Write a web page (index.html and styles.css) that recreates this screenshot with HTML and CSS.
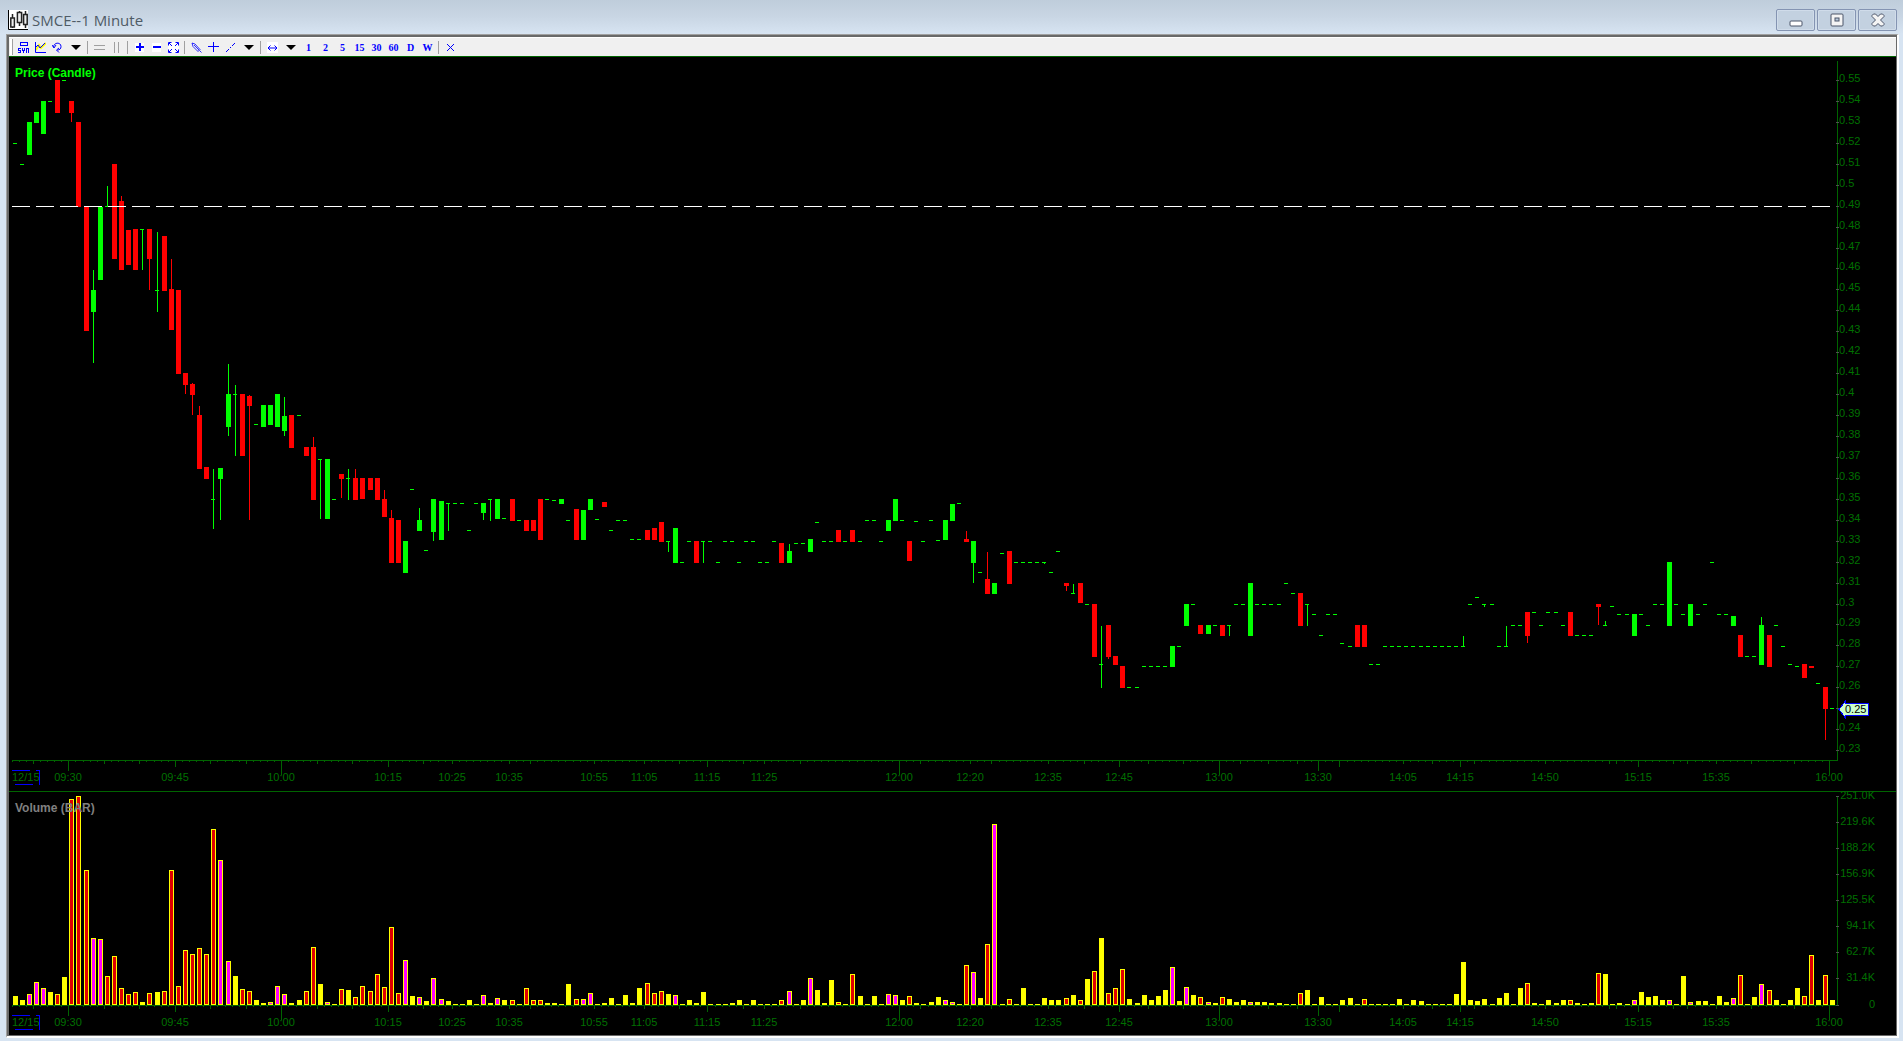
FILE: index.html
```
<!DOCTYPE html>
<html lang="en">
<head>
  <meta charset="UTF-8">
  <meta name="viewport" content="width=device-width, initial-scale=1.0">
  <title>SMCE--1 Minute</title>
  <link rel="stylesheet" href="styles.css">
</head>
<body>
  <!-- Title bar -->
  <header class="title-bar">
    <svg class="app-icon" width="20" height="20" viewBox="0 0 20 20">
      <rect width="20" height="20" fill="#fff"/>
      <path d="M.5 0v19.500H20" fill="none" stroke="#000"/>
      <path d="M4.500 4v4M4.500 17v1M11.500 1v2M11.500 13v3M17.500 1v3M17.500 15v3" stroke="#222" stroke-width="1.500" fill="none"/>
      <path d="M2.800 8h3.600v9H2.800zM9.400 2.500h4.200v10H9.400zM15.600 4.500h3.600v10h-3.600z" fill="#eee" stroke="#222" stroke-width="1.500"/>
    </svg>
    <h1>SMCE--1 Minute</h1>
    <div class="window-buttons">
      <button aria-label="Minimize">
        <svg width="14" height="14" viewBox="0 0 14 14"><rect x="1" y="8" width="12" height="5" rx="1" fill="#fff" stroke="#4b5468"/></svg>
      </button>
      <button aria-label="Maximize">
        <svg width="14" height="14" viewBox="0 0 14 14"><rect x="1" y="1" width="12" height="12" rx="1" fill="#f4f4f4" stroke="#4b5468"/><rect x="5" y="5" width="4" height="3" fill="#b9c9da" stroke="#4b5468"/></svg>
      </button>
      <button aria-label="Close">
        <svg width="14" height="14" viewBox="0 0 14 14"><path d="M1 2.500L2.500 1H4.500L7 3.500 9.500 1h2L13 2.500v1L9.500 7 13 10.500v1L11.500 13h-2L7 10.500 4.500 13h-2L1 11.500v-1L4.500 7 1 3.500z" fill="#f4f4f4" stroke="#4b5468"/></svg>
      </button>
    </div>
  </header>
  <main class="frame">
    <div class="frame-inner">
      <!-- Toolbar -->
      <nav class="toolbar">
        <span class="grip"></span>
        <button aria-label="Symbol"><svg width="11" height="11" viewBox="0 0 11 11" shape-rendering="crispEdges"><path d="M2.500.5h7v3h-7zM3 6.500H.5v2h2v2H0M4.500 6v2.500h2V6M5.500 8v3M8.500 11V6.500h2V11" fill="none" stroke="#00f"/></svg></button>
        <button aria-label="Studies"><svg width="11" height="11" viewBox="0 0 11 11"><path d="M1 8l3-5 2 3 5-5" fill="none" stroke="#ff0" stroke-width="2"/><path d="M.5 0v10.500H11M1 5l2-2 2 3 5-5" fill="none" stroke="#00f"/></svg></button>
        <button aria-label="Undo"><svg width="11" height="11" viewBox="0 0 11 11"><path d="M1.500 5C2 0 9 0 9 4.500 9 7 7.500 8 5.500 8" fill="none" stroke="#00f"/><path d="M0 3l2 3 2-3M7 6L4.500 8 7 10.500" fill="none" stroke="#00f"/></svg></button>
        <button class="caret" aria-label="Undo list"></button>
        <span class="sep"></span>
        <button aria-label="Horizontal split"><svg width="11" height="11" viewBox="0 0 11 11" shape-rendering="crispEdges"><path d="M0 3.500h11M0 7.500h11" stroke="#a0a0a0"/></svg></button>
        <button aria-label="Vertical split"><svg width="11" height="11" viewBox="0 0 11 11" shape-rendering="crispEdges"><path d="M3.500 0v11M7.500 0v11" stroke="#a0a0a0"/></svg></button>
        <span class="sep"></span>
        <button aria-label="Zoom in"><svg width="11" height="11" viewBox="0 0 11 11" shape-rendering="crispEdges"><rect x="1" y="1" width="9" height="9" fill="#fff"/><path d="M5 1h2v8H5zM2 4h8v2H2z" fill="#00f"/></svg></button>
        <button aria-label="Zoom out"><svg width="11" height="11" viewBox="0 0 11 11" shape-rendering="crispEdges"><rect x="1" y="1" width="9" height="9" fill="#fff"/><path d="M2 4h8v2H2z" fill="#00f"/></svg></button>
        <button aria-label="Fit"><svg width="11" height="11" viewBox="0 0 11 11"><rect width="11" height="11" fill="#fff"/><path d="M.5 3.500v-3h3M7.500.5h3v3M10.500 7.500v3h-3M3.500 10.500h-3v-3M1 1l3 3M10 1L7 4M10 10L7 7M1 10l3-3" fill="none" stroke="#00f"/></svg></button>
        <span class="sep"></span>
        <button aria-label="Draw"><svg width="11" height="11" viewBox="0 0 11 11"><path d="M1 1l1 3.500L7 9.500 9 7.500 4 2zM3 3l5 5M8.500 8.500l2 2" fill="none" stroke="#00f" stroke-width=".8"/></svg></button>
        <button aria-label="Crosshair"><svg width="11" height="11" viewBox="0 0 11 11" shape-rendering="crispEdges"><path d="M5.500 0v10M0 4.500h11" stroke="#00f"/></svg></button>
        <button aria-label="Trend line"><svg width="11" height="11" viewBox="0 0 11 11"><path d="M1 10l3-3M5 6l1-1M7 4l3-3" stroke="#00f"/></svg></button>
        <button class="caret" aria-label="Line list"></button>
        <span class="sep"></span>
        <button aria-label="Bar spacing"><svg width="11" height="11" viewBox="0 0 11 11"><rect width="11" height="11" fill="#fff"/><path d="M1 6h9M3.500 3.500L1 6l2.500 2.500M7.500 3.500L10 6 7.500 8.500" fill="none" stroke="#00f"/></svg></button>
        <button class="caret" aria-label="Spacing list"></button>
        <button>1</button>
        <button>2</button>
        <button>5</button>
        <button>15</button>
        <button>30</button>
        <button>60</button>
        <button>D</button>
        <button>W</button>
        <span class="sep"></span>
        <button aria-label="Close chart"><svg width="11" height="11" viewBox="0 0 11 11"><path d="M2 2l7 7M9 2L2 9" stroke="#00f"/></svg></button>
      </nav>
      <!-- Charts -->
      <svg id="price" class="pane price-pane"></svg>
      <svg id="volume" class="pane volume-pane"></svg>
    </div>
  </main>
  <script src="script.js"></script>
</body>
</html>
```

FILE: styles.css
```
* {
  box-sizing: border-box;
}
body {
  margin: 0;
  height: 100vh;
  display: flex;
  flex-direction: column;
  background: #d7e4f2;
  font-family: "Liberation Sans", Arial, sans-serif;
}
button {
  padding: 0;
  border: 0;
  background: none;
}
/* Title bar */
.title-bar {
  height: 34px;
  flex: none;
  display: flex;
  align-items: center;
  padding: 5px 6px 0 8px;
  background: linear-gradient(#bfcddb, #c9d6e4 50%, #d7e4f2);
}
.title-bar h1 {
  margin: 0 0 0 4px;
  font: 15px "Open Sans", "Noto Sans", sans-serif;
  color: #4f5b66;
}
.window-buttons {
  display: flex;
  gap: 2px;
  margin-left: auto;
}
.window-buttons button {
  display: flex;
  align-items: center;
  justify-content: center;
  width: 39px;
  height: 22px;
  border: 1px solid #8494b2;
  border-radius: 2px;
  background: #c3d1e0;
  box-shadow: inset 0 0 0 1px #d0dcea;
}
/* Sunken frame */
.frame {
  flex: 1;
  min-height: 0;
  display: flex;
  margin: 0 4px 3px 6px;
  border: solid #a0a0a0;
  border-width: 1px 2px 2px 1px;
  border-right-color: #fff;
  border-bottom-color: #fff;
}
.frame-inner {
  flex: 1;
  min-width: 0;
  display: flex;
  flex-direction: column;
  background: #000;
  border: solid #696969;
  border-width: 2px 1px 1px 2px;
}
/* Toolbar */
.toolbar {
  height: 20px;
  flex: none;
  display: flex;
  align-items: center;
  padding-left: 1px;
  background: #f0f0f0;
  border-top: 1px solid #fff;
  border-bottom: 1px solid #006400;
}
.toolbar button {
  display: flex;
  align-items: center;
  justify-content: center;
  width: 17px;
  height: 17px;
  font: bold 10px "Liberation Serif", "Times New Roman", serif;
  color: #00f;
}
.toolbar .caret {
  width: 19px;
}
.caret::before {
  content: "";
  border: solid transparent;
  border-width: 5px 5px 0;
  border-top-color: #000;
}
.grip {
  width: 3px;
  height: 16px;
  margin-right: 2px;
  background: #fff;
  border-right: 1px solid #a0a0a0;
}
.sep {
  width: 1px;
  height: 13px;
  margin: 0 3px 0 2px;
  background: #a0a0a0;
}
/* Chart panes */
.pane {
  display: block;
  width: 100%;
  min-height: 0;
  overflow: visible;
  shape-rendering: crispEdges;
}
.price-pane {
  flex: 735 0 0;
  border-bottom: 1px solid #006400;
}
.volume-pane {
  flex: 243 0 0;
}
.axis {
  stroke: #006400;
  fill: none;
}
.notch {
  stroke: #505050;
}
.label {
  font-size: 11px;
  fill: #007000;
}
.middle {
  text-anchor: middle;
}
.end {
  text-anchor: end;
}
.heading {
  font-size: 12px;
  font-weight: bold;
}
.price-heading {
  fill: #0f0;
}
.volume-heading {
  fill: #808080;
}
.up {
  fill: #0f0;
}
.down {
  fill: #f00;
}
.level {
  stroke: #fff;
  stroke-dasharray: 18 6;
}
.date-box {
  stroke: #00f;
  stroke-dasharray: 18 6;
  fill: none;
}
.bar {
  fill: #ff0;
}
.bar-r {
  fill: #e00000;
}
.bar-m {
  fill: #f0f;
}
.tag {
  fill: #cfc;
  stroke: #00f;
}
.tag-text {
  font-size: 11px;
  fill: #000;
}
```

FILE: script.js
```
// One entry per bar: "d y" is a doji, "g/r top bottom" a body; then optional high, low
const candles = `d 143|d 164|g 122 155|g 112 123|g 101 134|d 101|r 80 113|d 80|r 101 113 101 122|r 122 207
r 207 331|g 290 312 270 363|g 207 280|d 206 186 206|r 164 259|r 201 270 196|r 230 265|r 229 270|d 229 229 270|r 229 259 229 290
d 290 232 312|r 236 291|r 289 330 259|r 290 374|r 373 385 373 394|r 384 395 383 415|r 415 469 406|r 467 479|d 499 469 529|g 468 479 468 520
g 394 427 364 436|d 394 385 456|r 394 456|r 396 406 395 520|d 424|g 405 427|g 405 425|g 394 427|g 416 431 397 436|r 415 448
d 415|r 447 456|r 447 500 437|d 459 459 519|g 459 519|d 499|r 474 479 474 498|d 478 469 500|r 478 500 469|r 478 499
r 478 490|r 478 500|r 499 517 490|r 518 563 510|r 520 563|g 541 573|d 489|g 520 531 508|d 550|g 499 532 499 541
g 501 540|d 503 503 531|d 503|d 503|d 530|d 503|g 503 513 503 520|d 499 499 521|g 499 519|d 518
r 499 521|d 520|r 520 531|r 520 531|r 499 540|d 499|d 500|g 499 504|d 520|r 509 540
g 510 540|g 499 510|d 519|r 502 507|d 530|d 520|d 520|d 539|d 539|r 530 540
r 528 540|r 522 542|d 541 541 552|g 528 563|d 562|d 541|r 541 563|d 541 541 563|d 541|d 562
d 541|d 541|d 562|d 541|d 541|d 562|d 562|d 541|r 543 563|g 551 563 544
d 543|d 543|g 539 552|d 522|d 541|d 541|r 530 542|d 541|r 530 542|d 541
d 520|d 520|d 541|g 520 531|g 499 521|d 520|r 541 561|d 521|d 541|d 520
d 540|g 520 540|g 504 521|d 503|r 539 542 531|g 541 563 541 583|d 572|r 579 594 552|g 583 594|d 553
r 551 584|d 562|d 562|d 562|d 562|d 562 562 564|d 572|d 551|r 583 586 583 591|d 593 584 593
r 583 603|d 604|r 604 657|d 664 626 688|r 625 657 625 659|r 656 665|r 666 688|d 687|d 687|d 666
d 666|d 666|d 666|g 646 667|d 646|g 604 626|d 604|r 625 634|g 625 634|d 625
r 625 636|d 625 625 636|d 604|d 604|g 583 636|d 604|d 604|d 604|d 604|d 583
d 593|r 593 626|d 604 604 626|d 614|d 635|d 614|d 614|d 643|d 646|r 625 647
r 625 647|d 664|d 664|d 646|d 646|d 646|d 646|d 646|d 646|d 646
d 646|d 646|d 646|d 646|d 646 636 646|d 604|d 597|d 604 604 607|d 604|d 646
d 646 626 646|d 625|d 625|r 612 636 612 643|d 612|d 625|d 612|d 612|d 625|r 612 636
d 635|d 635|d 635|r 604 607 604 625|d 625 621 625|d 606|d 614|d 614|g 614 636|d 614
d 625|d 604|d 604|g 562 626|d 604|d 614|g 604 626|d 614|d 604|d 562
d 614|d 614|g 616 626|r 635 657|d 656|d 656|g 625 665 617|r 635 667|d 625|d 646
d 664|d 666|r 664 678|r 666 668|d 683|r 687 709 687 740|d 708`.split(/[|\n]/);

// Volume in units of 1.2K shares, the letter is the fill of the bar
const volumes = `y9 y5 m11 m23 m17 y13 r11 y28 r206 r209 r135 m67 m66 r29 r49 r17 r11 r13 y3 r12
y13 r14 r135 r19 r55 r51 r57 r51 r176 m145 m44 y29 r16 r14 y5 y2 m3 m19 m11 y2
y5 r14 r58 y21 m3 y1 r16 y15 r8 r19 r14 r31 r18 r78 r12 m45 y9 m8 y4 m27
m6 y4 y1 y1 y5 y1 m10 y2 m7 y5 r5 y1 r17 r5 r5 y2 y2 y1 y21 r6
m6 m12 y1 y2 y7 y1 y10 y2 y17 r22 r12 r14 y11 m10 y1 y5 y2 y13 y1 y1
y1 y2 y5 y1 y5 y1 y1 y1 r5 m14 y1 y5 m27 y15 y2 y25 r3 y1 r31 y9
y1 y9 y1 m11 m10 y5 r9 y2 y1 y3 y8 m5 m3 y1 r40 m33 y7 r61 m181 y1
r6 y1 y17 y1 y1 y7 y5 y5 r7 y10 r5 y26 r34 y67 r12 r17 r36 y6 y2 y10
y5 y9 y15 m38 y4 m18 y10 r8 m3 y2 r8 y6 y3 y5 m3 y3 y3 y2 y2 y1
y1 r12 y15 y1 y8 y1 y1 y5 y7 y1 r6 y1 y1 y1 y1 y6 y1 y5 y4 y1
y1 y1 y1 y11 y43 y5 y4 y6 y1 y7 y12 y1 y17 r22 y2 y1 y5 y2 y5 r5
y2 y1 y2 r32 y31 y1 y2 y1 m5 y13 y8 y9 y5 m5 y1 y29 m3 y4 y4 y1
y9 y3 m7 r30 y1 y8 m21 r15 y5 y1 y5 y17 r9 r50 y5 r30 y5`.split(/\s+/);

// Bars where a longer tick starts, by tick length
const ticks = {
  4: [3, 13, 18, 28, 33, 43, 48, 58, 62, 70, 73, 82, 89, 94, 103, 106, 111, 128, 135, 138, 146, 151, 160, 165,
    173, 177, 181, 196, 200, 206, 216, 225, 226, 234, 236, 240, 245, 251],
  7: [23, 53, 98, 156, 187, 204, 229],
  11: [8, 184],
  15: [38, 125, 170, 256]
};
const times = {
  8: "09:30", 23: "09:45", 38: "10:00", 53: "10:15", 62: "10:25", 70: "10:35", 82: "10:55", 89: "11:05",
  98: "11:15", 106: "11:25", 125: "12:00", 135: "12:20", 146: "12:35", 156: "12:45", 170: "13:00",
  184: "13:30", 196: "14:05", 204: "14:15", 216: "14:50", 229: "15:15", 240: "15:35", 256: "16:00"
};
const volumeLabels = ["251.0K", "219.6K", "188.2K", "156.9K", "125.5K", "94.1K", "62.7K", "31.4K", "0"];
const lastPrice = "0.25";

function rect(cls, x, y, w, h) {
  return `<rect class="${cls}" x="${x}" y="${y}" width="${w}" height="${h}"/>`;
}
function text(cls, x, y, s) {
  return `<text class="${cls}" x="${x}" y="${y}">${s}</text>`;
}
function barX(i, width) {
  return 4 + Math.floor(i * (width - 63) / 256.85);
}

function timeAxis(y, width) {
  let path = `M3 ${y}.5H${width - 59}`;
  for (let i = 0; i < candles.length; i++) {
    let len = 2;
    for (const key in ticks) {
      if (ticks[key].includes(i)) len = Number(key);
    }
    path += `M${barX(i, width) - 0.5} ${y}v${len}`;
  }
  let out = `<path class="axis" d="${path}"/>`;
  for (const i in times) {
    out += text("label middle", barX(i, width) - 1, y + 21, times[i]);
  }
  out += text("label", 3, y + 21, "12/15");
  out += `<path class="date-box" d="M3 ${y + 10}.5H30.500V${y + 24}.5H3"/>`;
  return out;
}

function drawPrice() {
  const svg = document.getElementById("price");
  const width = svg.clientWidth;
  const height = svg.clientHeight;
  const axisX = width - 59;
  const bottom = height - 31;
  const scale = bottom / 703;
  const row = v => Math.round((v - 57) * scale);
  let out = `<path class="axis" d="M${axisX}.5 4V${bottom + 1}"/>` + timeAxis(bottom, width);
  for (let n = 0; n <= 32; n++) {
    const y = row(80 + n * 20.94);
    const label = String((55 - n) / 100);
    out += `<path class="notch" d="M${axisX - 1} ${y}.5h3"/>`;
    // The tag below stands in for the label of the last price
    if (label !== lastPrice) {
      out += text("label", axisX + 2, y + 2, label);
    }
  }
  candles.forEach((item, i) => {
    const [kind, ...values] = item.split(" ");
    const v = values.map(Number).map(row);
    const x = barX(i, width);
    const cls = kind === "r" ? "down" : "up";
    if (kind === "d") v.splice(1, 0, v[0] + 1);
    out += rect(cls, x, v[0], kind === "d" ? 4 : 5, v[1] - v[0]);
    if (v.length > 2) {
      const low = v[3] || v[1];
      out += rect(cls, x + 2, v[2], 1, low - v[2]);
    }
  });
  out += `<path class="level" d="M3 ${row(206)}.5H${width - 65}"/>`;
  out += text("heading price-heading", 6, 20, "Price (Candle)");
  // Last price tag
  const y = row(709);
  out += `<path class="tag" d="M${axisX + 2} ${y}.5l6-8v2h23v12h-23v2z"/>`;
  out += text("tag-text", axisX + 8, y + 4, lastPrice);
  svg.innerHTML = out;
}

function drawVolume() {
  const svg = document.getElementById("volume");
  const width = svg.clientWidth;
  const height = svg.clientHeight;
  const axisX = width - 59;
  const bottom = height - 30;
  const scale = (bottom - 4) / 209;
  let out = `<path class="axis" d="M${axisX}.5 4V${bottom + 1}"/>` + timeAxis(bottom, width);
  volumeLabels.forEach((label, n) => {
    const y = Math.floor(4 + n * (bottom - 4) / 8);
    out += `<path class="notch" d="M${axisX - 1} ${y}.5h3"/>`;
    out += text("label end", axisX + 38, y + 3, label);
  });
  volumes.forEach((item, i) => {
    const x = barX(i, width);
    const h = Math.round(Number(item.slice(1)) * scale);
    out += rect("bar", x, bottom - h, 5, h);
    if (item[0] !== "y" && h > 2) {
      out += rect("bar-" + item[0], x + 1, bottom - h + 1, 3, h - 2);
    }
  });
  out += text("heading volume-heading", 6, 20, "Volume (BAR)");
  svg.innerHTML = out;
}

function draw() {
  drawPrice();
  drawVolume();
}
draw();
window.onresize = draw;
```
